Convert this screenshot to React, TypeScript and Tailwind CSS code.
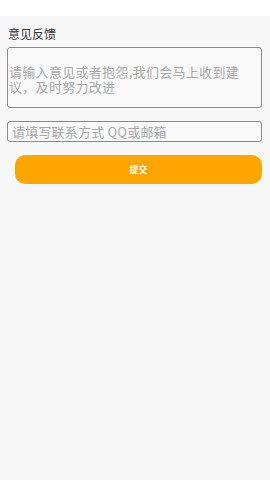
import React from "react";

export default function App() {
  return (
    <div
      className="w-[270px] h-[480px] bg-[#f7f7f7] flex flex-col"
      style={{ fontFamily: '"Noto Sans CJK SC", "Noto Sans", sans-serif' }}
    >
      <div className="h-[16px] bg-white shrink-0" />
      <div className="pl-[8px] pt-[10px] text-[12px] leading-[16px] text-[#333]">意见反馈</div>
      <div className="mt-[5px] ml-[7px] mr-[8px] h-[61px] rounded-[3px] border border-[#8a8a8a] bg-[#f9f9f9] pt-[16px] pl-[1px]">
        <div className="text-[13px] leading-[15px] text-[#a8a8a8] tracking-[0.3px] whitespace-nowrap">
          <div>请输入意见或者抱怨,我们会马上收到建</div>
          <div>议，及时努力改进</div>
        </div>
      </div>
      <div className="mt-[13px] ml-[7px] mr-[8px] h-[21px] rounded-[3px] border border-[#8a8a8a] bg-[#f9f9f9] flex items-center pl-[4px]">
        <span className="text-[13px] leading-[15px] text-[#a8a8a8] tracking-[0.2px]">请填写联系方式 QQ或邮箱</span>
      </div>
      <div className="mt-[13px] ml-[15px] mr-[8px] h-[29px] rounded-[10px] bg-[#ffa500] flex items-center justify-center">
        <span className="text-[9px] font-bold text-white">提交</span>
      </div>
    </div>
  );
}
